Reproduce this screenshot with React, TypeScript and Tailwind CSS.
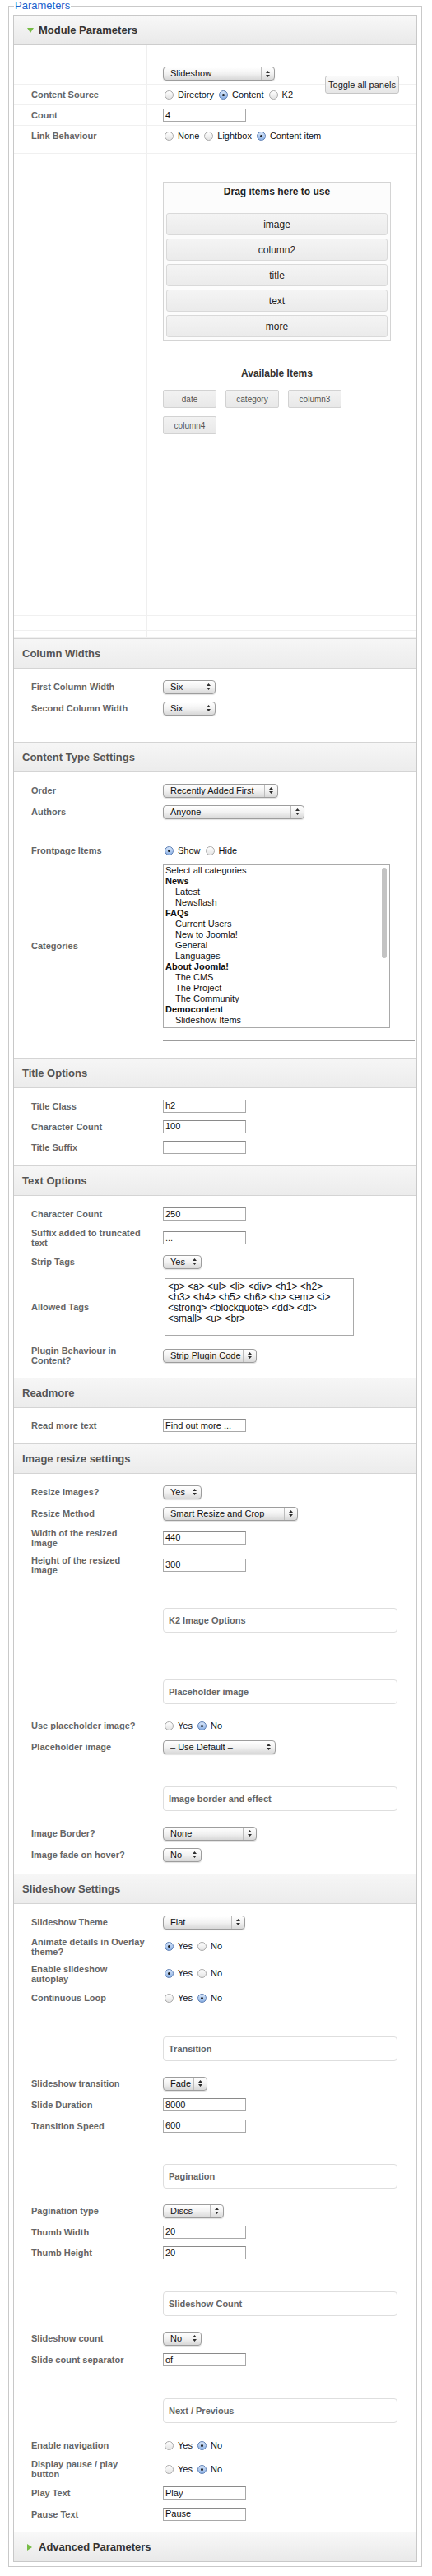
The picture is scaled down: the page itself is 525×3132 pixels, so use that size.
import React from "react";

// shared bits ------------------------------------------------------------

function Sel({ w, v }: { w: string; v: string }) {
  return (
    <div
      className={`${w} h-[17px] flex items-stretch rounded-[4px] border border-[#9d9d9d] bg-linear-to-b from-[#ffffff] via-[#f2f2f2] to-[#d8d8d8] shadow-[0_1px_1px_rgba(0,0,0,0.12)] text-[11px] text-[#111]`}
    >
      <span className="flex-1 pl-[8px] leading-[15px] whitespace-nowrap overflow-hidden">{v}</span>
      <span className="w-[16px] border-l border-[#bcbcbc] flex items-center justify-center">
        <svg width="5" height="8" viewBox="0 0 5 8">
          <path d="M2.5 0 L5 3 L0 3 Z M0 5 L5 5 L2.5 8 Z" fill="#2d2d2d" />
        </svg>
      </span>
    </div>
  );
}

function Inp({ v }: { v: string }) {
  return (
    <input
      readOnly
      value={v}
      className="w-[101px] h-[16px] border border-[#a8a8a8] border-t-[#8a8a8a] bg-white px-[2px] text-[11px] text-[#111] outline-none"
    />
  );
}

function Radio({ on }: { on: boolean }) {
  if (on)
    return (
      <span className="w-[11px] h-[11px] rounded-full border border-[#5a7db4] bg-linear-to-b from-[#d7e6fa] to-[#8db1e4] flex items-center justify-center">
        <span className="w-[3px] h-[3px] rounded-full bg-[#1b1b1b]" />
      </span>
    );
  return <span className="w-[11px] h-[11px] rounded-full border border-[#a9a9a9] bg-linear-to-b from-[#ffffff] to-[#e4e4e4]" />;
}

function Radios({ opts, sel }: { opts: string[]; sel: number }) {
  return (
    <div className="flex items-center text-[11px] text-[#111] pl-[2px]">
      {opts.map((o, i) => (
        <span key={o} className={`flex items-center ${i > 0 ? "ml-[6px]" : ""}`}>
          <Radio on={i === sel} />
          <span className="ml-[5px]">{o}</span>
        </span>
      ))}
    </div>
  );
}

function Row({ label, h, children, className = "" }: { label?: React.ReactNode; h: string; children?: React.ReactNode; className?: string }) {
  return (
    <div className={`flex items-center ${h} ${className}`}>
      <div className="w-[181px] shrink-0 pl-[21px] text-[11px] font-bold leading-[12px] text-[#666] whitespace-nowrap">{label}</div>
      <div className="flex items-center">{children}</div>
    </div>
  );
}

function Box({ t, className }: { t: string; className: string }) {
  return (
    <div className={`ml-[181px] w-[285px] h-[30px] rounded-[4px] border border-[#dedede] flex items-center pl-[6px] text-[11px] font-bold text-[#666] ${className}`}>
      {t}
    </div>
  );
}

function Head({ t }: { t: string }) {
  return (
    <div className="h-[37px] border-y border-[#d4d4d4] bg-linear-to-b from-[#f6f6f6] to-[#ececec] flex items-center pl-[10px] text-[13px] font-bold text-[#555]">
      {t}
    </div>
  );
}

function Rule({ className }: { className: string }) {
  return <div className={`ml-[181px] w-[306px] border-t border-[#9c9c9c] ${className}`} />;
}

// module parameters table row
function TRow({ label, h, children }: { label?: string; h: string; children?: React.ReactNode }) {
  return (
    <div className={`flex ${h} border-b border-[#f0f0f0]`}>
      <div className="w-[162px] shrink-0 border-r border-[#efefef] flex items-center pl-[21px] text-[11px] font-bold text-[#666]">{label}</div>
      <div className="flex-1 flex items-center pl-[19px]">{children}</div>
    </div>
  );
}

const cats: [string, number][] = [
  ["Select all categories", 0],
  ["News", 1],
  ["Latest", 2],
  ["Newsflash", 2],
  ["FAQs", 1],
  ["Current Users", 2],
  ["New to Joomla!", 2],
  ["General", 2],
  ["Languages", 2],
  ["About Joomla!", 1],
  ["The CMS", 2],
  ["The Project", 2],
  ["The Community", 2],
  ["Democontent", 1],
  ["Slideshow Items", 2],
  ["Features", 2],
];

const dragItems = ["image", "column2", "title", "text", "more"];
const chips = ["date", "category", "column3", "column4"];

export default function App() {
  return (
    <div className="w-[525px] bg-white font-['Liberation_Sans',Arial,Helvetica,sans-serif] text-[#222]">
      <fieldset className="ml-[10px] w-[503px] border border-[#c9c9c9] px-[5px] pb-[5px]">
        <legend className="ml-[1px] px-[1px] text-[13px] leading-[14px] text-[#2162cd]">Parameters</legend>

        <div className="relative mt-[4px] border border-[#c8c8c8]">
          {/* Module Parameters */}
          <div className="h-[36px] border-b border-[#cdcdcd] bg-linear-to-b from-[#f8f8f8] to-[#e9e9e9] flex items-center pl-[16px]">
            <svg width="8" height="6" viewBox="0 0 8 6">
              <path d="M0 0 L8 0 L4 6 Z" fill="#76bb45" />
            </svg>
            <span className="ml-[6px] text-[13px] font-bold text-[#333]">Module Parameters</span>
          </div>

          <button className="absolute left-[378px] top-[73px] w-[90px] h-[22px] rounded-[3px] border border-[#c6c6c6] bg-linear-to-b from-[#fafafa] to-[#e6e6e6] text-[11px] text-[#222]">
            Toggle all panels
          </button>

          <TRow h="h-[22px]" />
          <TRow h="h-[26px]">
            <Sel w="w-[136px]" v="Slideshow" />
          </TRow>
          <TRow label="Content Source" h="h-[25px]">
            <Radios opts={["Directory", "Content", "K2"]} sel={1} />
          </TRow>
          <TRow label="Count" h="h-[25px]">
            <Inp v="4" />
          </TRow>
          <TRow label="Link Behaviour" h="h-[25px]">
            <Radios opts={["None", "Lightbox", "Content item"]} sel={2} />
          </TRow>
          <TRow h="h-[9px]" />
          <div className="flex h-[562px] border-b border-[#f0f0f0]">
            <div className="w-[162px] shrink-0 border-r border-[#efefef]" />
            <div className="flex-1 pl-[19px] pt-[34px]">
              <div className="w-[277px] border border-[#d4d4d4] bg-[#fcfcfc] px-[3px] pb-[3px]">
                <div className="h-[22px] leading-[22px] text-center text-[12px] font-bold text-[#222] mb-[15px]">Drag items here to use</div>
                <div className="flex flex-col gap-[4px]">
                  {dragItems.map((d) => (
                    <div
                      key={d}
                      className="h-[27px] rounded-[3px] border border-[#d9d9d9] bg-linear-to-b from-[#f4f4f4] to-[#ebebeb] flex items-center justify-center text-[12px] text-[#222]"
                    >
                      {d}
                    </div>
                  ))}
                </div>
              </div>
              <div className="w-[277px] mt-[32px] h-[16px] leading-[16px] text-center text-[12px] font-bold text-[#333]">Available Items</div>
              <div className="w-[277px] mt-[12px] flex flex-wrap gap-x-[11px] gap-y-[10px]">
                {chips.map((c) => (
                  <div
                    key={c}
                    className="w-[65px] h-[22px] rounded-[2px] border border-[#d2d2d2] bg-linear-to-b from-[#f2f2f2] to-[#e8e8e8] flex items-center justify-center text-[10px] text-[#555]"
                  >
                    {c}
                  </div>
                ))}
              </div>
            </div>
          </div>
          <TRow h="h-[9px]" />
          <TRow h="h-[9px]" />
          <TRow h="h-[9px]" />

          {/* Column Widths */}
          <Head t="Column Widths" />
          <div className="pt-[9px] pb-[28px]">
            <Row label="First Column Width" h="h-[26px]">
              <Sel w="w-[64px]" v="Six" />
            </Row>
            <Row label="Second Column Width" h="h-[26px]">
              <Sel w="w-[64px]" v="Six" />
            </Row>
          </div>

          {/* Content Type Settings */}
          <Head t="Content Type Settings" />
          <div className="pt-[9px] pb-[20px]">
            <Row label="Order" h="h-[26px]">
              <Sel w="w-[140px]" v="Recently Added First" />
            </Row>
            <Row label="Authors" h="h-[26px]">
              <Sel w="w-[172px]" v="Anyone" />
            </Row>
            <Rule className="mt-[11px]" />
            <Row label="Frontpage Items" h="h-[26px]" className="mt-[9px]">
              <Radios opts={["Show", "Hide"]} sel={0} />
            </Row>
            <div className="flex items-center pt-[4px]">
              <div className="w-[181px] shrink-0 pl-[21px] text-[11px] font-bold text-[#666]">Categories</div>
              <div className="relative w-[276px] h-[199px] border border-[#a9a9a9] overflow-hidden bg-white">
                <div className="text-[11px] leading-[13px] text-[#111]">
                  {cats.map(([c, t]) => (
                    <div key={c} className={t === 2 ? "pl-[14px]" : t === 1 ? "pl-[2px] font-bold" : "pl-[2px]"}>
                      {c}
                    </div>
                  ))}
                </div>
                <div className="absolute right-[3px] top-[3px] w-[6px] h-[110px] rounded-full bg-[#c3c3c3]" />
              </div>
            </div>
            <Rule className="mt-[15px]" />
          </div>

          {/* Title Options */}
          <Head t="Title Options" />
          <div className="pt-[9px] pb-[10px]">
            <Row label="Title Class" h="h-[25px]">
              <Inp v="h2" />
            </Row>
            <Row label="Character Count" h="h-[25px]">
              <Inp v="100" />
            </Row>
            <Row label="Title Suffix" h="h-[25px]">
              <Inp v="" />
            </Row>
          </div>

          {/* Text Options */}
          <Head t="Text Options" />
          <div className="pt-[9px] pb-[10px]">
            <Row label="Character Count" h="h-[26px]">
              <Inp v="250" />
            </Row>
            <Row label={<>Suffix added to truncated<br />text</>} h="h-[32px]">
              <Inp v="..." />
            </Row>
            <Row label="Strip Tags" h="h-[26px]">
              <Sel w="w-[47px]" v="Yes" />
            </Row>
            <Row label="Allowed Tags" h="h-[84px]">
              <div className="ml-[2px] w-[230px] h-[70px] border border-[#a9a9a9] px-[3px] pt-[3px] text-[12px] leading-[13px] text-[#111]">
                &lt;p&gt; &lt;a&gt; &lt;ul&gt; &lt;li&gt; &lt;div&gt; &lt;h1&gt; &lt;h2&gt;
                <br />
                &lt;h3&gt; &lt;h4&gt; &lt;h5&gt; &lt;h6&gt; &lt;b&gt; &lt;em&gt; &lt;i&gt;
                <br />
                &lt;strong&gt; &lt;blockquote&gt; &lt;dd&gt; &lt;dt&gt;
                <br />
                &lt;small&gt; &lt;u&gt; &lt;br&gt;
              </div>
            </Row>
            <Row label={<>Plugin Behaviour in<br />Content?</>} h="h-[34px]">
              <Sel w="w-[114px]" v="Strip Plugin Code" />
            </Row>
          </div>

          {/* Readmore */}
          <Head t="Readmore" />
          <div className="pt-[8px] pb-[9px]">
            <Row label="Read more text" h="h-[26px]">
              <Inp v="Find out more ..." />
            </Row>
          </div>

          {/* Image resize settings */}
          <Head t="Image resize settings" />
          <div className="pt-[9px] pb-[10px]">
            <Row label="Resize Images?" h="h-[26px]">
              <Sel w="w-[47px]" v="Yes" />
            </Row>
            <Row label="Resize Method" h="h-[26px]">
              <Sel w="w-[164px]" v="Smart Resize and Crop" />
            </Row>
            <Row label={<>Width of the resized<br />image</>} h="h-[33px]">
              <Inp v="440" />
            </Row>
            <Row label={<>Height of the resized<br />image</>} h="h-[33px]">
              <Inp v="300" />
            </Row>
            <Box t="K2 Image Options" className="mt-[36px]" />
            <Box t="Placeholder image" className="mt-[57px]" />
            <Row label="Use placeholder image?" h="h-[26px]" className="mt-[13px]">
              <Radios opts={["Yes", "No"]} sel={1} />
            </Row>
            <Row label="Placeholder image" h="h-[26px]">
              <Sel w="w-[137px]" v="– Use Default –" />
            </Row>
            <Box t="Image border and effect" className="mt-[35px]" />
            <Row label="Image Border?" h="h-[26px]" className="mt-[14px]">
              <Sel w="w-[114px]" v="None" />
            </Row>
            <Row label="Image fade on hover?" h="h-[26px]">
              <Sel w="w-[47px]" v="No" />
            </Row>
          </div>

          {/* Slideshow Settings */}
          <Head t="Slideshow Settings" />
          <div className="pt-[9px] pb-[9px]">
            <Row label="Slideshow Theme" h="h-[26px]">
              <Sel w="w-[100px]" v="Flat" />
            </Row>
            <Row label={<>Animate details in Overlay<br />theme?</>} h="h-[33px]">
              <Radios opts={["Yes", "No"]} sel={0} />
            </Row>
            <Row label={<>Enable slideshow<br />autoplay</>} h="h-[33px]">
              <Radios opts={["Yes", "No"]} sel={0} />
            </Row>
            <Row label="Continuous Loop" h="h-[26px]">
              <Radios opts={["Yes", "No"]} sel={1} />
            </Row>
            <Box t="Transition" className="mt-[34px]" />
            <Row label="Slideshow transition" h="h-[26px]" className="mt-[14px]">
              <Sel w="w-[54px]" v="Fade" />
            </Row>
            <Row label="Slide Duration" h="h-[26px]">
              <Inp v="8000" />
            </Row>
            <Row label="Transition Speed" h="h-[25px]">
              <Inp v="600" />
            </Row>
            <Box t="Pagination" className="mt-[34px]" />
            <Row label="Pagination type" h="h-[26px]" className="mt-[14px]">
              <Sel w="w-[74px]" v="Discs" />
            </Row>
            <Row label="Thumb Width" h="h-[25px]">
              <Inp v="20" />
            </Row>
            <Row label="Thumb Height" h="h-[26px]">
              <Inp v="20" />
            </Row>
            <Box t="Slideshow Count" className="mt-[34px]" />
            <Row label="Slideshow count" h="h-[26px]" className="mt-[14px]">
              <Sel w="w-[47px]" v="No" />
            </Row>
            <Row label="Slide count separator" h="h-[26px]">
              <Inp v="of" />
            </Row>
            <Box t="Next / Previous" className="mt-[34px]" />
            <Row label="Enable navigation" h="h-[26px]" className="mt-[14px]">
              <Radios opts={["Yes", "No"]} sel={1} />
            </Row>
            <Row label={<>Display pause / play<br />button</>} h="h-[32px]">
              <Radios opts={["Yes", "No"]} sel={1} />
            </Row>
            <Row label="Play Text" h="h-[26px]">
              <Inp v="Play" />
            </Row>
            <Row label="Pause Text" h="h-[25px]">
              <Inp v="Pause" />
            </Row>
          </div>

          {/* Advanced Parameters */}
          <div className="h-[36px] border-t border-[#cdcdcd] bg-linear-to-b from-[#f8f8f8] to-[#e9e9e9] flex items-center pl-[16px]">
            <svg width="6" height="8" viewBox="0 0 6 8">
              <path d="M0 0 L6 4 L0 8 Z" fill="#76bb45" />
            </svg>
            <span className="ml-[8px] text-[13px] font-bold text-[#333]">Advanced Parameters</span>
          </div>
        </div>
      </fieldset>
    </div>
  );
}
